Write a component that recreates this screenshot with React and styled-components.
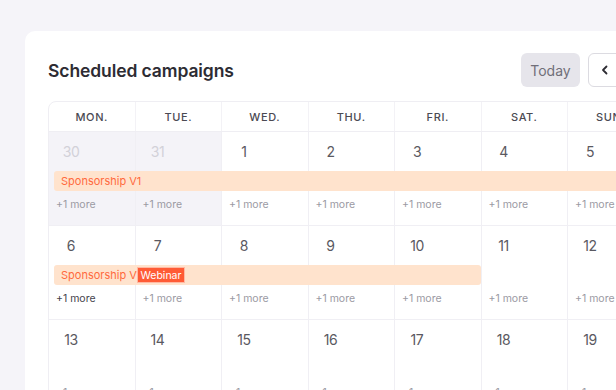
import React from 'react';
import styled, { createGlobalStyle } from 'styled-components';

const GlobalStyle = createGlobalStyle`
  html, body {
    margin: 0;
    padding: 0;
    background: #f5f4f9;
    font-family: Inter, "Noto Sans", sans-serif;
    overflow: hidden;
  }
`;

const Page = styled.div`
  padding: 31px 0 0 25px;
  width: 700px;
  height: 390px;
  box-sizing: border-box;
`;

const Card = styled.div`
  width: 651px;
  background: #fff;
  border-radius: 10px 10px 0 0;
  padding: 22px 23px 0;
  box-sizing: border-box;
  height: 400px;
`;

const Header = styled.div`
  display: flex;
  align-items: center;
  justify-content: space-between;
  height: 34px;
  margin-bottom: 14px;
`;

const Title = styled.h2`
  margin: 0;
  font-size: 17.5px;
  font-weight: 600;
  color: #2d2c33;
  letter-spacing: -0.1px;
`;

const Controls = styled.div`
  display: flex;
  align-items: center;
  gap: 8px;
`;

const TodayButton = styled.button`
  height: 34px;
  width: 59px;
  border: none;
  border-radius: 6px;
  background: #e6e5eb;
  color: #706f79;
  font-family: inherit;
  font-size: 14px;
  padding: 0;
`;

const NavGroup = styled.div`
  display: flex;
`;

const NavButton = styled.button`
  height: 34px;
  width: 33px;
  display: flex;
  align-items: center;
  justify-content: center;
  background: #fff;
  border: 1px solid #dcdbe1;
  border-radius: ${p => (p.$first ? '6px 0 0 6px' : '0 6px 6px 0')};
  margin-left: ${p => (p.$first ? '0' : '-1px')};
  padding: 0;
  color: #2d2c33;
`;

const Calendar = styled.div`
  border: 1px solid #efeef3;
  border-radius: 8px 8px 0 0;
  overflow: hidden;
  width: 606px;
`;

const HeadRow = styled.div`
  display: grid;
  grid-template-columns: repeat(7, 86.5px);
  height: 29px;
  border-bottom: 1px solid #efeef3;
`;

const HeadCell = styled.div`
  display: flex;
  align-items: center;
  justify-content: center;
  font-size: 11px;
  font-weight: 500;
  letter-spacing: 0.6px;
  color: #4b4a53;
  border-right: 1px solid #f3f2f6;
`;

const Week = styled.div`
  display: grid;
  grid-template-columns: repeat(7, 86.5px);
  grid-template-rows: 39px 20px 26px 8px;
  border-bottom: 1px solid #f0eff4;
`;

const CellBg = styled.div`
  grid-row: 1 / -1;
  grid-column: ${p => p.$col};
  background: ${p => (p.$muted ? '#f4f3f8' : '#fff')};
  border-right: 1px solid #f0eff4;
`;

const DayNum = styled.div`
  grid-row: 1;
  grid-column: ${p => p.$col};
  width: 28px;
  margin-left: 8px;
  display: flex;
  align-items: center;
  justify-content: center;
  font-size: 14px;
  letter-spacing: -0.4px;
  color: ${p => (p.$muted ? '#d2d1d8' : '#5a5961')};
  z-index: 1;
`;

const Bar = styled.div`
  grid-row: 2;
  grid-column: ${p => p.$span};
  margin: 0 ${p => p.$gap}px 0 5px;
  background: #ffe3cd;
  border-radius: 3px;
  display: flex;
  align-items: center;
  padding-left: 7px;
  font-size: 11px;
  color: #ff6a3d;
  white-space: nowrap;
  overflow: hidden;
  z-index: 1;
`;

const Chip = styled.div`
  grid-row: 2;
  grid-column: ${p => p.$col};
  justify-self: start;
  align-self: center;
  margin-left: 1px;
  height: 16px;
  padding: 0 3px;
  display: flex;
  align-items: center;
  background: #ff5b35;
  border: 1px solid #ffb9a4;
  box-sizing: border-box;
  color: #fff;
  font-size: 10.5px;
  z-index: 2;
`;

const More = styled.div`
  grid-row: 3;
  grid-column: ${p => p.$col};
  padding-left: 7px;
  display: flex;
  align-items: center;
  font-size: 10.5px;
  color: ${p => (p.$dark ? '#45444c' : '#9b9aa3')};
  z-index: 1;
`;

const days = ['MON.', 'TUE.', 'WED.', 'THU.', 'FRI.', 'SAT.', 'SUN.'];

const weeks = [
  {
    nums: [30, 31, 1, 2, 3, 4, 5],
    muted: [true, true, false, false, false, false, false],
    bar: { span: '1 / 8', gap: -6 },
    darkMore: false,
  },
  {
    nums: [6, 7, 8, 9, 10, 11, 12],
    muted: [],
    bar: { span: '1 / 6', gap: 1 },
    chip: { col: 2, label: 'Webinar' },
    darkMore: true,
  },
  {
    nums: [13, 14, 15, 16, 17, 18, 19],
    muted: [],
    darkMore: false,
  },
];

const Chevron = () => (
  <svg width="12" height="12" viewBox="0 0 12 12" fill="none">
    <path d="M7.5 2.5 4 6l3.5 3.5" stroke="#2d2c33" strokeWidth="1.8" strokeLinecap="round" strokeLinejoin="round" />
  </svg>
);

const ChevronRight = () => (
  <svg width="12" height="12" viewBox="0 0 12 12" fill="none">
    <path d="M4.5 2.5 8 6 4.5 9.5" stroke="#2d2c33" strokeWidth="1.8" strokeLinecap="round" strokeLinejoin="round" />
  </svg>
);

const App = () => {
  return (
    <>
      <GlobalStyle />
      <Page>
        <Card>
          <Header>
            <Title>Scheduled campaigns</Title>
            <Controls>
              <TodayButton>Today</TodayButton>
              <NavGroup>
                <NavButton $first><Chevron /></NavButton>
                <NavButton><ChevronRight /></NavButton>
              </NavGroup>
            </Controls>
          </Header>
          <Calendar>
            <HeadRow>
              {days.map(d => (
                <HeadCell key={d}>{d}</HeadCell>
              ))}
            </HeadRow>
            {weeks.map((w, wi) => (
              <Week key={wi}>
                {w.nums.map((n, i) => (
                  <CellBg key={'bg' + i} $col={i + 1} $muted={w.muted[i]} />
                ))}
                {w.nums.map((n, i) => (
                  <DayNum key={'n' + i} $col={i + 1} $muted={w.muted[i]}>{n}</DayNum>
                ))}
                {w.bar && (
                  <Bar $span={w.bar.span} $gap={w.bar.gap}>Sponsorship V1</Bar>
                )}
                {w.chip && <Chip $col={w.chip.col}>{w.chip.label}</Chip>}
                {w.nums.map((n, i) => (
                  <More key={'m' + i} $col={i + 1} $dark={w.darkMore && i === 0}>+1 more</More>
                ))}
              </Week>
            ))}
          </Calendar>
        </Card>
      </Page>
    </>
  );
};

export default App;
